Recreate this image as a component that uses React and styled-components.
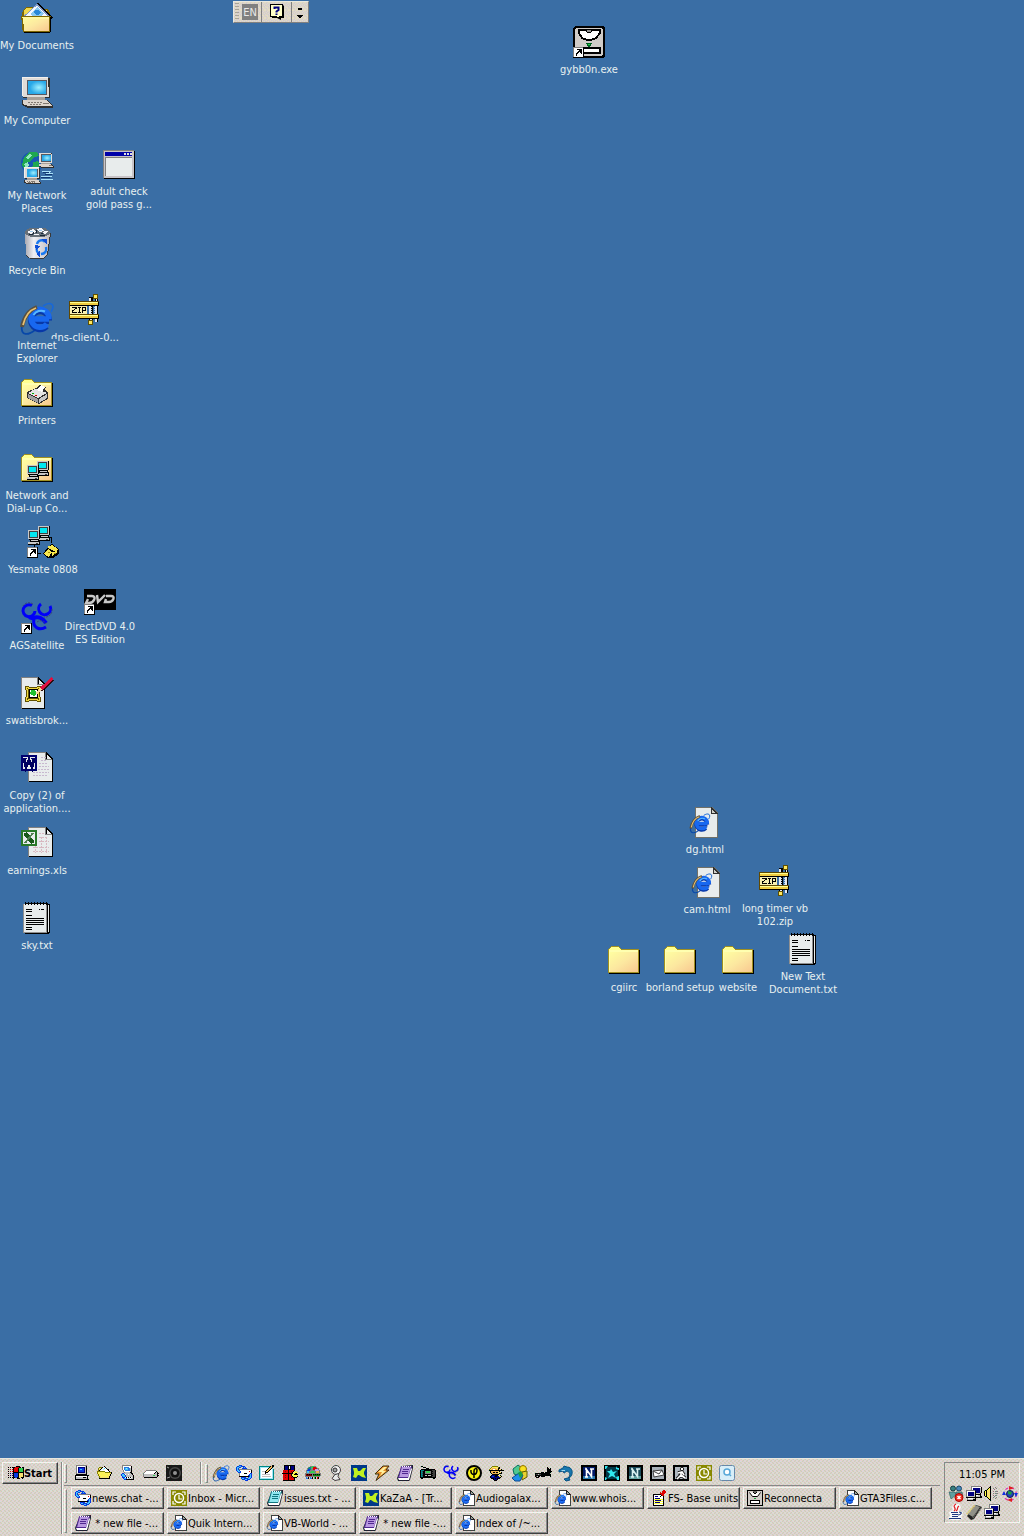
import React from "react";
import styled, { createGlobalStyle, css } from "styled-components";

const dither = (a, b, c, d) =>
  `url("data:image/svg+xml,${encodeURIComponent(
    `<svg xmlns='http://www.w3.org/2000/svg' width='8' height='8' shape-rendering='crispEdges'><rect width='8' height='8' fill='${a}'/><path fill='${b}' d='M0 0h1v1h-1zM2 1h1v1h-1zM4 0h1v1h-1zM6 1h1v1h-1zM1 3h1v1h-1zM3 2h1v1h-1zM5 3h1v1h-1zM7 2h1v1h-1zM0 4h1v1h-1zM2 5h1v1h-1zM4 4h1v1h-1zM6 5h1v1h-1zM1 7h1v1h-1zM3 6h1v1h-1zM5 7h1v1h-1zM7 6h1v1h-1z'/><path fill='${c}' d='M1 0h1v1h-1zM3 1h1v1h-1zM5 0h1v1h-1zM7 1h1v1h-1zM0 3h1v1h-1zM2 2h1v1h-1zM4 3h1v1h-1zM6 2h1v1h-1zM1 4h1v1h-1zM3 5h1v1h-1zM5 4h1v1h-1zM7 5h1v1h-1zM0 7h1v1h-1zM2 6h1v1h-1zM4 7h1v1h-1zM6 6h1v1h-1z'/><path fill='${d}' d='M0 1h1v1h-1zM4 1h1v1h-1zM1 2h1v1h-1zM5 2h1v1h-1zM3 3h1v1h-1zM7 3h1v1h-1zM2 4h1v1h-1zM6 4h1v1h-1zM0 6h1v1h-1zM4 6h1v1h-1z'/></svg>`
  )}")`;

const face = dither("#dcdcd4", "#f0c0c0", "#b8dcc0", "#e0d0d8");
const barFace = dither("#e4dcc4", "#d8d8c4", "#dcd0cc", "#d0c8d8");

const GlobalStyle = createGlobalStyle`
  * { box-sizing: border-box; }
  body { margin: 0; background: #3a6ea5; }
  body, button { font-family: "DejaVu Sans Condensed", "Noto Sans", sans-serif; font-size: 11px; line-height: 13px; }
  button { margin: 0; padding: 0; border: 0; background: none; color: inherit; cursor: default; }
  svg { display: block; flex: none; overflow: visible; }
`;

const raised = css`
  background-image: ${face};
  border: 1px solid;
  border-color: #f4f4f0 #404040 #404040 #f4f4f0;
  box-shadow: inset -1px -1px 0 #888888;
`;

const Screen = styled.div`
  min-height: 100vh;
  display: flex;
  flex-direction: column;
`;
const Desktop = styled.main`
  position: relative;
  flex: 1;
  overflow: hidden;
  color: #e8f0f0;
`;
const Shortcut = styled.button`
  position: absolute;
  left: ${(p) => p.$x - 37}px;
  top: ${(p) => p.$y}px;
  width: 74px;
  display: flex;
  flex-direction: column;
  align-items: center;
  gap: 5px;
`;
const Label = styled.span`
  white-space: pre;
  text-align: center;
  background: #3a6ea5;
`;
const LanguageBar = styled.div`
  position: absolute;
  left: 233px;
  top: 1px;
  height: 22px;
  display: flex;
  align-items: center;
  background-image: ${barFace};
  border: 1px solid;
  border-color: #e8e8e0 #808080 #808080 #e8e8e0;
`;
const DotGrip = styled.span`
  width: 4px;
  height: 18px;
  margin: 0 3px 0 1px;
  background: repeating-linear-gradient(#a8a498 0 1px, transparent 1px 3px);
`;
const Lang = styled.button`
  width: 16px;
  height: 16px;
  background: #808080;
  color: #e8e8e8;
`;
const BarTool = styled.button`
  height: 20px;
  width: ${(p) => p.$w}px;
  display: grid;
  place-items: center;
  border-left: 1px solid #808080;
`;
const Gap = styled.span`
  width: 3px;
`;

const Taskbar = styled.footer`
  display: grid;
  grid-template-columns: 62px minmax(0, 1fr) 76px;
  column-gap: 4px;
  padding: 3px 4px 2px 0;
  background-image: ${face};
  border-top: 1px solid #e8e8e0;
  color: #000;
`;
const StartCell = styled.div`
  padding-left: 2px;
  border-right: 1px solid #888888;
`;
const StartButton = styled.button`
  ${raised}
  width: 56px;
  height: 22px;
  display: flex;
  align-items: center;
  justify-content: center;
  font-weight: bold;
`;
const Bands = styled.div`
  margin-left: -4px;
  border-left: 1px solid #f4f4f0;
  padding-left: 1px;
`;
const LaunchRow = styled.div`
  height: 24px;
  padding-bottom: 1px;
  margin-bottom: 1px;
  display: flex;
  align-items: center;
  border-bottom: 1px solid #888888;
`;
const Grip = styled.span`
  width: 3px;
  align-self: stretch;
  margin: 2px ${(p) => p.$after}px 1px 0;
  border: 1px solid;
  border-color: #f4f4f0 #888888 #888888 #f4f4f0;
`;
const Divider = styled.span`
  width: 2px;
  align-self: stretch;
  margin: 0 3px 0 18px;
  border-left: 1px solid #888888;
  border-right: 1px solid #f4f4f0;
`;
const Icons = styled.div`
  display: flex;
  gap: 7px;
`;
const TaskRow = styled.div`
  display: flex;
`;
const Tasks = styled.div`
  flex: 1;
  display: flex;
  flex-wrap: wrap;
  gap: 3px;
`;
const Task = styled.button`
  ${raised}
  width: 93px;
  height: 22px;
  padding-left: 3px;
  display: flex;
  align-items: center;
  gap: 1px;
  white-space: pre;
  overflow: hidden;
`;
const Tray = styled.div`
  height: 61px;
  padding: 5px 3px 0;
  border: 1px solid;
  border-color: #888888 #f4f4f0 #f4f4f0 #888888;
  text-align: center;
`;
const TrayIcons = styled.div`
  display: grid;
  grid-template-columns: repeat(4, 16px);
  gap: 2px;
  margin-top: 5px;
`;

/* ---------- icon drawing ---------- */
const ink = {
  k: "#000000", w: "#ffffff", e: "#e8ecec", g: "#808080", s: "#c0c0c0", b: "#000080", B: "#0838e0",
  c: "#40c8f8", C: "#a0e8f8", y: "#f8e070", Y: "#ffff40", o: "#808000", r: "#e00000", R: "#800000",
  p: "#6838a8", P: "#c0a0e8", G: "#008000", l: "#30d050", t: "#008888", d: "#404040", L: "#2878e0", n: "#f0b050",
};
const Sprite = ({ rows }) => {
  const paths = {};
  rows.trim().split(/\s+/).forEach((row, y) => {
    for (let x = 0; x < row.length; ) {
      const ch = row[x];
      let n = 1;
      while (row[x + n] === ch) n++;
      if (ink[ch]) paths[ch] = (paths[ch] || "") + `M${x} ${y}h${n}v1h-${n}z`;
      x += n;
    }
  });
  return (
    <svg width="16" height="16" viewBox="0 0 16 16" shapeRendering="crispEdges" aria-hidden="true">
      {Object.entries(paths).map(([ch, d]) => <path key={ch} d={d} fill={ink[ch]} />)}
    </svg>
  );
};
const Big = ({ children, smooth }) => (
  <svg width="32" height="32" viewBox="0 0 32 32" shapeRendering={smooth ? "auto" : "crispEdges"} aria-hidden="true">{children}</svg>
);
const Small = ({ children }) => (
  <svg width="16" height="16" viewBox="0 0 16 16" aria-hidden="true">{children}</svg>
);

const Arrow = ({ x = 0, y = 21 }) => (
  <g transform={`translate(${x} ${y})`} shapeRendering="crispEdges">
    <path fill="#808080" d="M0 0h11v11H0z" /><path fill="#fff" d="M1 1h9v9H1z" /><path fill="#000" d="M10 0h1v11H0v-1h10z" />
    <path fill="#000" d="M4 2h5v5H8V6H7V5H6v1H5v1H4v2H3V6h1V5h1V4h1V3H4z" />
  </g>
);
const Explorer = () => (
  <g fill="none" shapeRendering="auto">
    <path d="M22 4C29-1 35 2 30 10" stroke="#1868d8" strokeWidth="1.6" />
    <path d="M1 23C-1 35 8 33 14 28" stroke="#0848a8" strokeWidth="1.8" />
    <path d="M28 19H12M28 18.500A9 9 0 1 0 25.500 24.500" stroke="#0838a8" strokeWidth="6" />
    <path d="M28 17H12M28 17A9 9 0 1 0 26 22" stroke="#1868f0" strokeWidth="5.400" />
    <path d="M12.500 13A9 9 0 0 1 24 9.500" stroke="#58b8ff" strokeWidth="2" />
    <path d="M1 25C3 14 8 8 16 5" stroke="#585040" strokeWidth="4" />
    <path d="M2 23C4 14 9 8 15 6" stroke="#e8c070" strokeWidth="1.800" />
  </g>
);
const FolderShape = () => (
  <>
    <path fill="#a09020" d="M0 5h1V4h1V3h1V2h8v1h1v1h1v1h18v24H0z" />
    <path fill="#000" d="M31 6h1v24H1v-1h30z" />
    <path fill="#ffff90" d="M1 5h1V4h1V3h8v1h1v1h1v1H1z" />
    <path fill="url(#folder)" d="M1 8h29v20H1z" />
    <path fill="#ffffb0" d="M1 6h29v2H1zM1 7h1v21H1z" />
  </>
);
const DocShape = ({ x = 7, y = 1, w = 25, h = 30 }) => (
  <g transform={`translate(${x} ${y})`}>
    <path fill="#808080" d={`M0 0h${w - 7}v1h1v1h1v1h1v1h1v1h1v1h1v1h1V${h}H0z`} />
    <path fill="#000" d={`M1 ${h - 1}h${w - 2}V7h1v${h - 7}H1zM${w - 7} 0l7 7h-7z`} />
    <path fill="#e8ecec" d={`M1 1h${w - 9}v7h7v${h - 9}H1zM${w - 6} 3l4 4h-4z`} />
  </g>
);
const PcShape = ({ x, y, s = 1 }) => (
  <g transform={`translate(${x} ${y}) scale(${s})`}>
    <path fill="#303030" d="M1 1h27v20H1zM0 23h26l5 6v2H6L0 28z" />
    <path fill="#e0dcd8" d="M0 0h26l1 20H1z" />
    <path fill="#585860" d="M5 3h20v15H5z" />
    <path fill="url(#screen)" d="M6 4h18v13H6z" />
    <path fill="#f4f0ec" d="M0 0h26v1H1v18H0z" />
    <path fill="#a8a098" d="M5 20h18v3H5z" />
    <path fill="#dcd4cc" d="M1 23h24l5 6H6L1 27z" />
    <path fill="#807870" d="M6 25h2v1H6zM9 25h2v1H9zM12 25h2v1h-2zM15 25h2v1h-2zM18 25h2v1h-2zM8 27h2v1H8zM11 27h2v1h-2zM14 27h2v1h-2zM17 27h2v1h-2zM21 26h6v1h-6z" />
  </g>
);
const NetPc = ({ x, y }) => (
  <g transform={`translate(${x} ${y})`}>
    <path fill="#000" d="M1 0h11v9h-1v2h1v4H0v-3h2v-2H1z" />
    <path fill="#c8c8c8" d="M0 0h11v9H0zM0 12h11v2H0zM3 10h7v1H3z" />
    <path fill="#404040" d="M1 1h9v7H1zM8 13h2v1H8z" />
    <path fill="#00e8f0" d="M2 2h7v5H2z" />
  </g>
);
const TwoPcs = ({ x, y }) => (
  <g transform={`translate(${x} ${y})`}>
    <NetPc x={11} y={0} />
    <NetPc x={1} y={4} />
  </g>
);

const MyDocuments = () => (
  <Big>
    <path fill="#806800" d="M2 8l3-3h9v2h13l2 4v19l-2 1H3L1 27V12z" />
    <path fill="#f0d850" d="M3 8l2-2h8l2 2h11v8H3z" />
    <path fill="#000" d="M15 2l2-1 15 14-3 3h-3z" />
    <path fill="#f4f8ff" stroke="#8098c8" d="M2.500 15L16 2.500 29 15.500 26 19H4z" />
    <path fill="#88c8f0" d="M9 12l7-7 7 7-7 5z" />
    <path fill="#2888d8" d="M12 10l3-2h2l3 2-3 3h-2z" />
    <path fill="#806800" d="M0 14h30l-1 16-1 1H3l-1-1z" />
    <path fill="url(#folder)" d="M2 15h26v13l-1 1H3z" />
    <path fill="#fff8a0" d="M1 15h27v2H2z" />
    <path fill="#000" d="M29 15h1v15h-1zM3 30h26v1H3z" />
  </Big>
);
const MyComputer = () => <Big><PcShape x={1} y={0} /></Big>;
const MyNetwork = () => (
  <Big>
    <circle cx="11" cy="11" r="11" fill="#1858b0" shapeRendering="auto" />
    <path fill="#20a850" d="M3 5l6-5h7l2 4-5 1-3 4-5 2-2 6-2-4zM12 10l5-1 2 4-4 8-4-3z" />
    <path fill="#90e8c0" d="M4 6l4-4 3 1-3 4zM3 12l4-2 1 4-3 2z" />
    <PcShape x={18} y={1} s={0.48} />
    <PcShape x={3} y={15} s={0.56} />
    <path fill="none" stroke="#a8e0f8" d="M21 19.500h9l-5 2h7M20 24.500h11M20 27.500h12" />
    <path fill="#103870" d="M22 20h6v1h-6zM24 22h7v1h-7zM20 25h9v1h-9z" />
  </Big>
);
const AppWindow = () => (
  <Big>
    <path fill="#000" d="M1 3h31v28H1z" />
    <path fill="#c8c4c8" d="M0 2h31v28H0z" />
    <path fill="#808080" d="M0 2h31v1H1v27H0zM2 9h27v1H3v18H2z" />
    <path fill="#e8ecec" d="M3 10h26v18H3z" />
    <path fill="#0000a8" d="M2 4h27v4H2z" />
    <path fill="#e0e0e0" d="M21 5h2v2h-2zM24 5h2v2h-2zM27 5h2v2h-2z" />
  </Big>
);
const RecycleBin = () => (
  <Big>
    <path fill="#383838" d="M6 6h24l-3 22-5 4H10l-5-3z" />
    <path fill="url(#bin)" d="M4 6h25l-3 22-4 3H9l-4-3z" />
    <path fill="#687078" d="M4 4l5-3h15l5 3v3l-6 3H10L4 7z" />
    <path fill="#f4f4f8" d="M6 5l6-3 3 3-5 2zM16 2l4-1 3 3-5 1zM23 4h4l-2 3-4-1zM13 7h5v1h-5z" />
    <path fill="#a0c8e8" d="M9 4h3v1H9zM18 3h3v1h-3z" />
    <path fill="#182838" d="M12 5h1v2h-1zM15 3h1v3h-1zM20 6h2v1h-2zM8 7h4v1H8zM19 8h5v1h-5z" />
    <g fill="none" stroke="#1878f0" strokeWidth="2.400" shapeRendering="auto">
      <path d="M16 17c1-4 6-5 8-2M25 20c1 4-1 7-5 7M16 20c-1 3 0 6 3 7" />
    </g>
    <path fill="#1050d8" d="M21 12h5v6zM14 18l5 1-4 4zM19 23v7l-4-3z" />
  </Big>
);
const Ie = () => <Big smooth><Explorer /></Big>;
const Zip = () => (
  <Big>
    <path fill="#000" d="M20 3h4v25h-4zM26 4h3v24h-3z" />
    <path fill="#e8ecf0" d="M20 4h2v5h-2zM20 11h2v9h-2zM27 4h1v5h-1zM26 11h2v9h-2zM26 24h2v4h-2zM21 24h2v3h-2z" />
    <path fill="none" stroke="#c0d8f0" strokeDasharray="1 1" d="M22.500 11v9M25.500 11v9" />
    <path fill="#604800" d="M0 7h30v5H18v8h12v5H0z" />
    <path fill="#000" d="M1 11h29v1H1zM1 24h29v1H1zM29 8h1v3h-1zM29 21h1v3h-1z" />
    <path fill="#f0cc40" d="M1 8h28v3H1zM1 21h28v3H1z" />
    <path fill="#ffff90" d="M1 8h28v1H1zM1 21h28v1H1z" />
    <path fill="#f8f0b0" d="M1 12h17v8H1z" />
    <path fill="none" stroke="#000" d="M3 13.500h4v1L3.500 17v1.500H8M9 13.500h3M10.500 13v6M9 18.500h3M13.500 19v-5.500h3v3h-3" />
    <path fill="#d8b020" stroke="#605000" d="M24.500.5h4v4h-4zM19.500 26.500h4v4h-4z" />
    <path fill="#ffe860" d="M25 1h3v3h-3zM20 27h3v3h-3z" />
  </Big>
);
const Printers = () => (
  <Big>
    <FolderShape />
    <path fill="#303030" d="M6 15l9-4 3-3 7 2-1 3 3 3v6l-9 5-12-6z" />
    <path fill="#e4e4e4" d="M7 16l7-4 12 4-9 5z" />
    <path fill="#a0a0a0" d="M7 17l10 5v4L7 21z" />
    <path fill="#c8c8c8" d="M18 22l8-5v4l-8 5z" />
    <path fill="#fff" d="M16 13l4-5 4 2-3 5z" />
    <path fill="#00b000" d="M11 16h2v1h-2z" /><path fill="#d00000" d="M14 18h2v1h-2z" />
  </Big>
);
const DialUp = () => <Big><FolderShape /><TwoPcs x={5} y={9} /></Big>;
const Yesmate = () => (
  <Big>
    <TwoPcs x={0} y={0} />
    <path fill="none" stroke="#000" d="M22.500 11.500h2v5M7.500 19v2M11 27.500h3" />
    <Arrow x={0} />
    <path fill="#000" d="M16 28l4-6 5-4 7 5v5l-6 4h-6z" />
    <path fill="#f8e850" d="M17 27l4-4 4 3-3 5-3-1zM20 21l5-2 6 4-2 3-6-3z" />
    <path fill="#f8e850" d="M25 26l5-1v2l-5 3z" />
    <path fill="#a89000" d="M21 26h2v1h-2zM27 27h2v1h-2z" />
  </Big>
);
const AgShape = () => (
  <g fill="none" stroke="#0000f8" shapeRendering="auto">
    <path d="M11 3.500A6 6 0 1 0 14 9" strokeWidth="3" />
    <path d="M20 2A6 6 0 1 0 29 4" strokeWidth="3" />
    <path d="M13 17C11 26 19 29 25 25" strokeWidth="3" />
    <path d="M12 16c5-2 10 0 13 5M8 15l6 2" strokeWidth="4" />
    <path d="M2 4a7 7 0 0 1 10-2M31 7a7 7 0 0 1-8 8M16 20a6 6 0 0 1 9 2" stroke="#384878" strokeDasharray="2 1" />
  </g>
);
const AgSatellite = () => <Big><AgShape /><Arrow x={0} /></Big>;
const Dvd = () => (
  <Big>
    <path fill="#000" d="M0 6h32v21H0z" />
    <g fill="none" stroke="#c8c8c8" strokeWidth="2.400" shapeRendering="auto">
      <path d="M3 13h5c5 0 2 7-3 7H2l2-4M13 12l1 7 7-7M22 13h5c5 0 2 6-2 6h-4l1-3" />
    </g>
    <Arrow x={0} />
  </Big>
);
const Painting = () => (
  <Big>
    <DocShape x={0} y={0} w={24} h={32} />
    <path fill="#605000" d="M4 9h4v1h8V9h4v4h-1v7h1v5h-4v-1H8v1H4v-5h1v-7H4z" />
    <path fill="none" stroke="#f0d840" d="M5.500 10.500h2v1h9v-1h2v2h-1v8h1v3h-2v-1h-9v1h-2v-3h1v-8h-1z" />
    <path fill="#fff" stroke="#000" d="M8.500 12.500h8v8h-8z" />
    <path fill="#20c030" d="M10 13h4l2 3-3 3-4-2z" />
    <path stroke="#301010" strokeWidth="4" d="M20 13L32 2" />
    <path stroke="#e01040" strokeWidth="3" d="M20 12L31.500 1" />
    <path stroke="#f8d8a0" strokeWidth="2" d="M15 17l5-5" />
  </Big>
);
const Word = () => (
  <Big>
    <DocShape x={7} y={0} w={25} h={30} />
    <path fill="none" stroke="#c8b8d0" strokeDasharray="2 1" d="M20 5.500h5M20 8.500h6M18 11.500h9M18 14.500h10M17 17.500h11M12 20.500h16M12 23.500h15" />
    <path fill="#000070" d="M0 3h16v16H0z" /><path fill="#e8ecec" d="M2 5h12v12H2z" />
    <path fill="none" stroke="#000060" strokeWidth="3" d="M3 6l2 9 3-7 3 7 2-9" /><path fill="#000070" d="M2 6h4v1H2zM10 6h4v1h-4z" />
  </Big>
);
const Excel = () => (
  <Big>
    <DocShape x={7} y={0} w={25} h={30} />
    <path fill="none" stroke="#d8b8c0" strokeDasharray="2 1" d="M18 6.500h6M18 10.500h9M18 14.500h10M12 20.500h16M12 24.500h16M14.500 19v7M20.500 10v16M25.500 10v16" />
    <path fill="#287828" d="M0 3h16v16H0z" /><path fill="#e8ecec" d="M2 5h12v12H2z" />
    <path fill="none" stroke="#185818" strokeWidth="4" d="M4 6l8 10" /><path fill="none" stroke="#508050" strokeWidth="2" d="M12 6L4 16" />
  </Big>
);
const TextFile = () => (
  <Big>
    <path fill="#000" d="M4 1h23v1h2v29h-1v1H4z" />
    <path fill="#909090" d="M2 2h24v29H2z" /><path fill="#e8ecec" d="M3 2h22v28H3zM27 3h1v27h-1z" />
    <path fill="none" stroke="#000" strokeWidth="3" strokeDasharray="1 2" d="M4 1.500h22" />
    <path fill="#000" d="M5 7h6v1H5zM18 7h1v1h-1zM20 7h3v1h-3zM5 9h6v1H5zM5 13h6v1H5zM5 16h18v1H5zM5 18h18v1H5zM5 20h18v1H5zM5 22h18v1H5zM5 25h6v1H5zM5 27h6v1H5z" />
  </Big>
);
const DiskShape = () => (
  <>
    <path fill="#000" d="M2 0h28l2 2v28l-2 2H2l-2-2V2z" /><path fill="#d0ccc8" d="M3 2h25l2 2v24l-2 2H3l-1-1V3z" />
    <path fill="#fff" stroke="#000" strokeWidth="2" d="M6 4h21v3l-4 5-5 2h-4l-5-2-3-5z" />
    <path fill="#909090" stroke="#000" d="M13 3h6l-1 3-2 1-2-1z" />
    <path fill="#20d040" stroke="#006020" d="M13 17h6l-3 4z" />
    <path fill="#fff" stroke="#000" strokeWidth="2" d="M9 22h18v5H9z" />
  </>
);
const Disk = () => <Big><DiskShape /><Arrow x={0} /></Big>;
const Folder = () => <Big><FolderShape /></Big>;
const Html = () => (
  <Big>
    <path fill="#707068" d="M6 1h17l6 6v25H6z" /><path fill="#e8ecec" d="M7 2h15v6h6v23H7z" /><path fill="#303030" d="M22 1l7 7h-7z" /><path fill="#d0d0c8" d="M23 4l3 3h-3z" />
    <g transform="translate(1 7) scale(.62)"><Explorer /></g>
  </Big>
);

const desktopItems = [
  [Disk, "gybb0n.exe", 589, 26], [MyDocuments, "My Documents", 37, 2], [MyComputer, "My Computer", 37, 77],
  [MyNetwork, "My Network\nPlaces", 37, 152], [AppWindow, "adult check\ngold pass g...", 119, 148],
  [RecycleBin, "Recycle Bin", 37, 227], [Zip, "dns-client-0...", 85, 294], [Ie, "Internet\nExplorer", 37, 302],
  [Printers, "Printers", 37, 377], [DialUp, "Network and\nDial-up Co...", 37, 452], [Yesmate, "Yesmate 0808", 43, 526],
  [AgSatellite, "AGSatellite", 37, 602], [Dvd, "DirectDVD 4.0\nES Edition", 100, 583], [Painting, "swatisbrok...", 37, 677],
  [Word, "Copy (2) of\napplication....", 37, 752], [Excel, "earnings.xls", 37, 827], [TextFile, "sky.txt", 37, 902],
  [Html, "dg.html", 705, 806], [Html, "cam.html", 707, 866], [Zip, "long timer vb\n102.zip", 775, 865],
  [Folder, "cgiirc", 624, 944], [Folder, "borland setup", 680, 944], [Folder, "website", 738, 944],
  [TextFile, "New Text\nDocument.txt", 803, 933],
];

/* ---------- 16px icons ---------- */
const Ie16 = () => <Small><g transform="scale(.5)"><Explorer /></g></Small>;
const IePage = () => (
  <Small>
    <path fill="#fff" stroke="#404040" shapeRendering="crispEdges" d="M4.500.5h7l4 4v11h-11z" /><path fill="#a0a0a0" stroke="#202020" d="M11.500.5v4h4z" />
    <g transform="translate(0 3) scale(.36)"><Explorer /></g>
  </Small>
);
const FlagIcon = () => <Sprite rows={`
................ ........kkkk.... k.k.kkkrrrrkk.kk .....krrrrkllllk k.r.rkrrrrkllllk .....krrrrkllllk k.r.rkrrrrkllllk .....kkkkkkkkkkk
k.b.bkBBBBkyyyyk .....kBBBBkyyyyk k.b.bkBBBBkyyyyk .....kBBBBkyyyyk k.k.kkkBBkkyykkk .....k...kkk..k. ................ ................`} />;
const DesktopPc = () => <Sprite rows={`
..ggggggggggg... ..gwwwwwwwwsk... ..gwbbbbbbbsk... ..gwbBBBBBbsk... ..gwbBccBBbsk... ..gwbBBBBBbsk... ..gwbBBBBBbsk... ..gwbbbbbbbsk...
..gsssssssssk... ..kkkkkkkkkkk... .kkkkkkkkkkkkkk. .kwwwwwwwwwwwk. .kssssssskkksk. .ksssssssssssk. .kkkkkkkkkkkkkk. ................`} />;
const OpenFolder = () => <Sprite rows={`
................ .......k........ ..oookewk....... .oyykewcwk...... .oykewCwwwkk.... .okewwwwwwwk.... oooooooowwwwk... oyYyYyYyooooook.
oYyYyYyYyYyYyyk. .oyYyYyYyYyYyk.. .oYyYyYyYyYyyk.. ..oyYyYyYyYyk... ..oyyyyyyyyyk... ..kkkkkkkkkkk... ................ ................`} />;
const MailPc = () => <Sprite rows={`
..ggggggggg..... ..gwwwwwwwwk.... ..gwLLLLLwwk.... ..gwLcCcLLsk.... ..gwLcccLLsk.... ...gwLLLLLsk.... ...gwwwwwwsk.... ....gssssskk....
..BBssssssskk... .BccBwsswsssk... .BcccBsssssssk.. ..BccBsssssssk.. ..BBBwkwkwkwsk.. ...BccBwsswssk.. ....BBkkkkkkkk.. ................`} />;
const Drive = () => <Sprite rows={`
................ ................ ................ ................ ................ ...gggggggggg... ..gwwwwwwwwwwk.. .gwwwwwwwwwwksk.
gwwwwwwwwwwksskk gsssssssssssssk. gsssssssssllsskk gsssssssssssssk. .kkkkkkkkkkkkk.. ................ ................ ................`} />;
const Speaker = () => (
  <Small>
    <path fill="#181818" d="M0 0h16v16H0z" /><circle cx="9" cy="8" r="6" fill="#484848" /><circle cx="9" cy="8" r="4.500" fill="#101010" /><circle cx="9" cy="8" r="2" fill="#909090" /><path stroke="#a0a0a0" d="M1 2l2 1M1 13l3-1" />
  </Small>
);
const Outlook = () => <Sprite rows={`
...BBB.......... .BBccBBBB....... BccBB..BcB...... BcB...BBBBB..... BcBggggggggggggg BccBwwwwwwwwwwwk .BccBwwwwwwwwrwk ..BBBwwwwwwwwwwk
...gwwwwkkkwwwBB ...gwwwwwwwwwBcB ...gwwwwwwwwBBcB ...kkkkkkkkkkBcB .....BBBBB..BccB .....BccBBBBccB. ......BBBccBBB.. .........BBB....`} />;
const PenPage = () => <Sprite rows={`
.............kk. tttttttttttknkk. tCCCCCCCCCknnk.. tCwwwwwwwkynkC.. tCwwwwwwkynkwCt. tCwwwwwkynkwwCt. tCwssskynkwwwCt. tCwwwwkkkwwwwCt.
tCwwwwkwwwwwwCt. tCwsssssssswwCt. tCwwwwwwwwwwwCt. tCwssssssssswCt. tCwwwwwwwwwwwCt. tCCCCCCCCCCCCCt. ttttttttttttttt. ................`} />;
const Blocks = () => <Sprite rows={`
..kkkkkkkkkkk... ..kbbbkwkbbbk... ..kbbbkwkbbbk... ..kbbbkwkbbbk... ..kbbbkkkbbbk... .rrrrrkrrrrrk... .rrRrrkrrRrkyyy. .rrrrrkrrrkyYYYy
kkkkkkkkkkkyYkk. .rrrrrkrrkyYkkkk .rrRrrkrrkyYYYYy .rrrrrkrrrkyYYYk .rrRrrkrrRrkkkk. .rrrrrkrrrrrk... .rrrrrkrrrrrk... .kkkkkkkkkkkk...`} />;
const Paints = () => <Sprite rows={`
................ .....ggllgg..... ...gttllrrrg.... ..gtttggrrrrgg.. ..gBBtggrrPPPg.. .gBBBgggggPPPPg. .gccgglllggnnng. .gccglllllgnnng.
gggggggggggggggg gRkRkRkgkGkGkGkg gRRRRRRgGGGGGGGg ggggggggggggggg. .Lsk.Lsk.lk.rk.. .LLk.LLk.lk.rk.. ................ ................`} />;
const Webcam = () => (
  <Small><circle cx="8" cy="5" r="4.500" fill="#f0f0f0" stroke="#404040" /><circle cx="7" cy="5" r="2" fill="#a0a0a0" stroke="#303030" /><path fill="#e8e8e8" stroke="#404040" d="M7 9.500l4-1-1 3 2 3-5 1-3-2z" /></Small>
);
const Kazaa = () => (
  <Small><path fill="#003888" d="M0 0h16v16H0z" /><path fill="#c0f020" d="M2 3h4l1 3h2l3-3h3l-2 4v2l2 4-4-1-3-2H7l-2 3-3-1 1-3V7z" /></Small>
);
const Winamp = () => (
  <Small><path fill="#e89028" stroke="#403010" d="M9 1h6l-3 4h3L2 15.500 5 9H1z" /><path fill="#fff0a0" d="M10 2h3l-4 4h3l-6 5 2-4H4z" /></Small>
);
const Notebook = ({ light = "#b898e0", dark = "#502890" }) => (
  <Small>
    <path fill="#202030" d="M5 1l11-1v3l-3 12-1 1H1l-1-3z" /><path fill={light} stroke={dark} d="M4.500 1.500h10l-3 11H1.500z" /><path stroke={dark} fill="none" d="M6 4.500h6M5 6.500h6M5 8.500h6" /><path fill="#fff" d="M1 13h10l3-10 1 1-3 11H2z" /><path stroke="#fff" strokeDasharray="1 1" d="M5 1.500h9" />
  </Small>
);
const Radio = () => <Sprite rows={`
................ .kk............. ...kkk.......... ......kkk....... .kkkkkkkkkkkkkk. ktttkkkkkkkkdddk ktdkkgllllgkkddk kttkkgllllgkdddk
ktdkkggggggkkddk kttkkkkkkkkkdddk ktdkksskssskkddk kttkkkkkkkkkdddk kkkkkkkkkkkkkkkk .kk..........kk. ................ ................`} />;
const Ag16 = () => <Small><g transform="scale(.5)"><AgShape /></g></Small>;
const YellowDisc = () => (
  <Small><circle cx="8" cy="8" r="7" fill="#f8f010" stroke="#000" strokeWidth="2" /><path fill="none" stroke="#000" strokeWidth="1.500" d="M5 5c-1 6 6 6 6 0 0-2-3-2-3 1v7" /></Small>
);
const Driver = () => <Sprite rows={`
................ ...oooooo....... ..oyyYYyyok..... .oynnnnyykk..... oynnwwnnnkyyk... kkkkkkkkkkkkkkk. .knnnnnnnyk..... .knnkknkkyyyk...
..knnnnnnykkk... ...kkkkkkk...... ..kbbbkkkyyk.... .kbBBbkkbbyyk... .kbbbbbbbbbk.... ..kkkbkbkkk..... ....kbbbk....... .....kkk........`} />;
const Msn = () => (
  <Small><path d="M1 4l5-4 4 3-3 8-5-2z" fill="#50c890" stroke="#087060" /><circle cx="11" cy="4" r="3.500" fill="#f8e020" stroke="#907000" /><path d="M10 7l5-1v6l-5 3z" fill="#e8d030" stroke="#606000" /><path d="M0 13l7-5 4 2-3 6H3z" fill="#2090e8" stroke="#104890" /><path fill="#18a040" d="M6 8l3-2 2 4-3 3z" /></Small>
);
const Shoe = () => <Sprite rows={`
................ ................ ............k... ............kk.k. ............kkkk. ............kkkk. ............kkkkk ......kkk.kkkkkk
kkkkkkkkkkkkkkk. kddsddkkkkkkkkkk kkkkkkkkkkkkkkkk kdskk.kkkk.....k .kkk............ ................ ................ ................`} />;
const Dolphin = () => (
  <Small><path fill="#1878b0" stroke="#085080" d="M1 5l4-2 1-2 3 1c6 0 7 8 2 11l1 2-4 1-2-2 4-1c3-3 2-6-1-7-2 1-2 2-3 2l-1-2-4 1z" /><path fill="#a0d8f0" d="M4 5h3v1H3z" /></Small>
);
const Netscape = ({ bg = "#001868", low = "#2878b0", tone = "#fff" }) => (
  <Small><path fill={bg} stroke="#000" strokeWidth="2" d="M1 1h14v14H1z" /><path fill={low} d="M2 11h12v3H2z" /><path fill="none" stroke={tone} strokeWidth="1.600" d="M4 12h3M5.500 12V4.500l5 7V4M4 4h2M9 4h4" /></Small>
);
const Star = () => (
  <Small><path fill="#003848" stroke="#000" strokeWidth="2" d="M1 1h14v14H1z" /><path fill="#30e8f0" d="M7 4l2 3 4-1-3 3 2 4-4-2-4 2 2-4-3-3h3zM12 1l1 2h2v2l-3-1zM1 1h3L2 4H1zM12 12l3-1v4h-2zM1 12l2 1-1 2H1z" /></Small>
);
const BoxMail = () => (
  <Small><path fill="#a8b0b8" stroke="#000" strokeWidth="2" d="M1 1h14v14H1z" /><path fill="#fff" stroke="#404040" d="M3 6l9-1 2 5-10 2z" /><path fill="none" stroke="#404040" d="M3 6l6 3 3-4" /></Small>
);
const BoxMan = () => (
  <Small><path fill="#b0b8c0" stroke="#000" strokeWidth="2" d="M1 1h14v14H1z" /><circle cx="9" cy="4" r="1.700" fill="#fff" stroke="#202020" /><path fill="none" stroke="#202020" strokeWidth="3.500" d="M5 8l4-1 2 3M8 7v3l-4 4M8 10l4 3" /><path fill="none" stroke="#fff" strokeWidth="1.600" d="M5 8l4-1 2 3M8 7v3l-4 4M8 10l4 3" /></Small>
);
const Clock = () => (
  <Small><path fill="#888800" d="M0 0h16v16H0z" /><path fill="none" stroke="#fff" strokeWidth="1.200" d="M2 5V2h3M11 2h3v3M14 11v3h-3M5 14H2v-3M8 5v4h3" /><circle cx="8" cy="8" r="4.500" fill="none" stroke="#fff" strokeWidth="1.500" /></Small>
);
const Find = () => (
  <Small><rect x=".5" y=".5" width="15" height="15" rx="2" fill="#d8eef8" stroke="#6888a8" /><circle cx="8" cy="7" r="3" fill="#fff" stroke="#58a8d8" strokeWidth="1.500" /><path stroke="#58a8d8" strokeWidth="1.500" d="M10 9l2 2" /></Small>
);
const Pinned = () => <Sprite rows={`
............rr.. ...........rrrr. .........r.rrrr. .........rrrrr.. ..kkkkkkkkrrr... ..kwwwwwwwkrr... ..kwbbbwwkwwk... ..kwwwwwwwwwk...
..kwbbbbbwwwk... ..kYYYYYYYYYk... ..kwbbbbbbwwk... ..kYYYYYYYYYk... ..kwbbbbbwwwk... ..kYYYYYYYYYk... ..kwwwwwwwwwk... ..kkkkkkkkkkk...`} />;
const Disk16 = () => (
  <Small><path fill="#d0ccc8" stroke="#000" shapeRendering="crispEdges" d="M.5.5h15v15H.5z" /><path fill="#fff" stroke="#000" d="M2.500 2.500l3 4h5l3-4M6 2h4l-2 2z" /><path fill="#20a040" d="M7 8h2v1H7z" /><path fill="#fff" stroke="#000" shapeRendering="crispEdges" d="M3.500 10.500h9v3h-9z" /></Small>
);
const Users = () => (
  <Small><circle cx="5" cy="2.500" r="2.500" fill="#388080" stroke="#184040" /><circle cx="11" cy="2.500" r="2.500" fill="#4888b8" stroke="#184868" /><path fill="#60a0a0" stroke="#285858" strokeWidth=".6" d="M1 6h6l1 3-5 4zM8 6h6l1 4H8z" /><circle cx="11" cy="11.500" r="4" fill="#f03020" stroke="#a00" /><path stroke="#fff" strokeWidth="1.500" d="M9.500 10l3 3M12.500 10l-3 3" /></Small>
);
const Net16 = () => <Sprite rows={`
.....gggggggggg. .....gwwwwwwwwwk .....gwbbbbbbbsk .....gwbbbbbbbsk gggggggggbbbbbsk gwwwwwwwwkbbbbsk gwbbbbbbskbbbbsk gwbbbbbbskssssk.
gwbbbbbbskkkkkk. gwbbbbbbskwwssk. gssssssssksssskk kkkkkkkkkkkkkkkk .gwwwwwssk...... .gssssskkk...... .kkkkkkkkk...... ................`} />;
const Volume = () => <Sprite rows={`
......k......... .....kk....g.... ....kYk..g..g.. ...kYyk...g..... .kkYyyk......... kYkyyyk..g.ggg.. kYkyyyk......... kYkyyyk..g.ggg..
kYkyyyk......... kYkyyyk..g.gg... .kkYyyk...g..... ...kYyk..g..g... ....kYk....g.... .....kk......... ......k......... ................`} />;
const Orbit = () => (
  <Small><circle cx="8" cy="8" r="3.500" fill="#2040c0" stroke="#102050" /><path fill="#20a040" d="M6 5l4 1-1 3-3-1z" /><circle cx="8" cy="8" r="6.300" fill="none" stroke="#e020b0" strokeWidth="1.200" strokeDasharray="3 3" /><path fill="#e02020" d="M7 0l5 2-5 2zM10 12v4l-5-2z" /><path fill="#1030e0" d="M0 9l2-4 2 4zM12 7h4l-2 4z" /></Small>
);
const Java = () => (
  <Small><path fill="#f8f8f8" d="M6 0h5l2 3-2 4 4 1-1 4-1 1 2 1-4 2H3l-3-2 2-2-1-4 4-2-1-3z" /><path fill="none" stroke="#e02020" strokeWidth="1.200" d="M8 0C3 3 10 4 6 7M11 2C8 4 11 5 8 7" /><path fill="none" stroke="#203880" strokeWidth="1.200" d="M3 8.500h7M4 10.500h6M4 12.500h6M1 14.500h12M11 8c4 0 2 3-1 3" /></Small>
);
const Chip = () => (
  <Small><path fill="#202020" d="M1 12L10 1l6 2-8 12-3 1z" /><path fill="#909088" d="M2 10l7-9 5 2-7 10z" /><path fill="none" stroke="#e8c860" strokeDasharray="1 1" strokeWidth="2" d="M1 10l8-9" /><path stroke="#686860" strokeDasharray="1 1" strokeWidth="2" d="M7 14l8-10" /></Small>
);
const BlueBook = () => <Notebook light="#90e8f0" dark="#107880" />;
const Composer = () => <Netscape bg="#184858" low="#60a0a0" tone="#d8f0f0" />;

const quickLaunch = [["Show Desktop", DesktopPc], ["Folder", OpenFolder], ["Computer", MailPc], ["Drive", Drive], ["Speaker", Speaker]];
const linkBar = [
  ["Internet Explorer", Ie16], ["Outlook Express", Outlook], ["Editor", PenPage], ["Blocks", Blocks], ["Paint", Paints], ["Webcam", Webcam],
  ["KaZaA", Kazaa], ["Winamp", Winamp], ["TextPad", Notebook], ["Radio", Radio], ["AGSatellite", Ag16], ["Disc", YellowDisc], ["Driver", Driver],
  ["Messenger", Msn], ["Shoe", Shoe], ["Dolphin", Dolphin], ["Netscape", Netscape], ["Star", Star],
  ["Netscape Composer", Composer], ["Mail", BoxMail], ["Instant Messenger", BoxMan], ["Outlook", Clock], ["Find", Find],
];
const tasks = [
  [Outlook, "news.chat -..."], [Clock, "Inbox - Micr..."], [BlueBook, "issues.txt - ..."], [Kazaa, "KaZaA - [Tr..."], [IePage, "Audiogalax..."],
  [IePage, "www.whois..."], [Pinned, "FS- Base units"], [Disk16, "Reconnecta"], [IePage, "GTA3Files.c..."], [Notebook, " * new file -..."],
  [IePage, "Quik Intern..."], [IePage, "VB-World - ..."], [Notebook, " * new file -..."], [IePage, "Index of /~..."],
];
const trayIcons = [["Users", Users], ["Network", Net16], ["Volume", Volume], ["Connection", Orbit], ["Java", Java], ["Hardware", Chip], ["Dial-up", Net16]];

const IconButton = ({ item: [name, Icon] }) => <button type="button" aria-label={name}><Icon /></button>;

const Gradients = () => (
  <svg width="0" height="0" aria-hidden="true">
    <defs>
      <linearGradient id="folder" x2="1" y2="1"><stop offset="0" stopColor="#ffffa0" /><stop offset=".5" stopColor="#fce8a0" /><stop offset="1" stopColor="#f8c890" /></linearGradient>
      <radialGradient id="screen" cx=".6" cy=".5"><stop offset="0" stopColor="#a0f0ff" /><stop offset="1" stopColor="#28a8e8" /></radialGradient>
      <linearGradient id="bin"><stop offset="0" stopColor="#a8a8b0" /><stop offset=".35" stopColor="#f0f0f4" /><stop offset="1" stopColor="#c0bcc0" /></linearGradient>
    </defs>
  </svg>
);

export default function App() {
  return (
    <Screen>
      <GlobalStyle />
      <Gradients />
      <Desktop>
        {desktopItems.map(([Icon, label, x, y]) => (
          <Shortcut type="button" key={label} $x={x} $y={y}><Icon /><Label>{label}</Label></Shortcut>
        ))}
        <LanguageBar>
          <DotGrip />
          <Lang type="button">EN</Lang>
          <Gap />
          <BarTool type="button" $w={30} aria-label="Help">
            <Small>
              <path fill="#000" d="M3 1h11l1 1v12h-3v2l-4-2H3z" /><path fill="#ffffc8" stroke="#000" shapeRendering="crispEdges" d="M1.500.5h12v12h-3v2l-3-2h-6z" />
              <path fill="none" stroke="#000080" strokeWidth="2" d="M5.500 5V3.500h4V6L7.500 7.500V8.500M7.500 9.500v1.500" />
            </Small>
          </BarTool>
          <BarTool type="button" $w={17} aria-label="Options">
            <Small><path fill="#000" d="M6 4h4v2H6zM5 11h6v1h-1v1H9v1H7v-1H6v-1H5z" /></Small>
          </BarTool>
        </LanguageBar>
      </Desktop>
      <Taskbar>
        <StartCell><StartButton type="button"><FlagIcon />Start</StartButton></StartCell>
        <Bands>
          <LaunchRow>
            <Grip $after={7} />
            <Icons>{quickLaunch.map((i) => <IconButton key={i[0]} item={i} />)}</Icons>
            <Divider />
            <Grip $after={5} />
            <Icons>{linkBar.map((i) => <IconButton key={i[0]} item={i} />)}</Icons>
          </LaunchRow>
          <TaskRow>
            <Grip $after={4} />
            <Tasks>
              {tasks.map(([Icon, label], i) => <Task type="button" key={i}><Icon />{label}</Task>)}
            </Tasks>
          </TaskRow>
        </Bands>
        <Tray>
          <time>11:05 PM</time>
          <TrayIcons>{trayIcons.map((i) => <IconButton key={i[0]} item={i} />)}</TrayIcons>
        </Tray>
      </Taskbar>
    </Screen>
  );
}
